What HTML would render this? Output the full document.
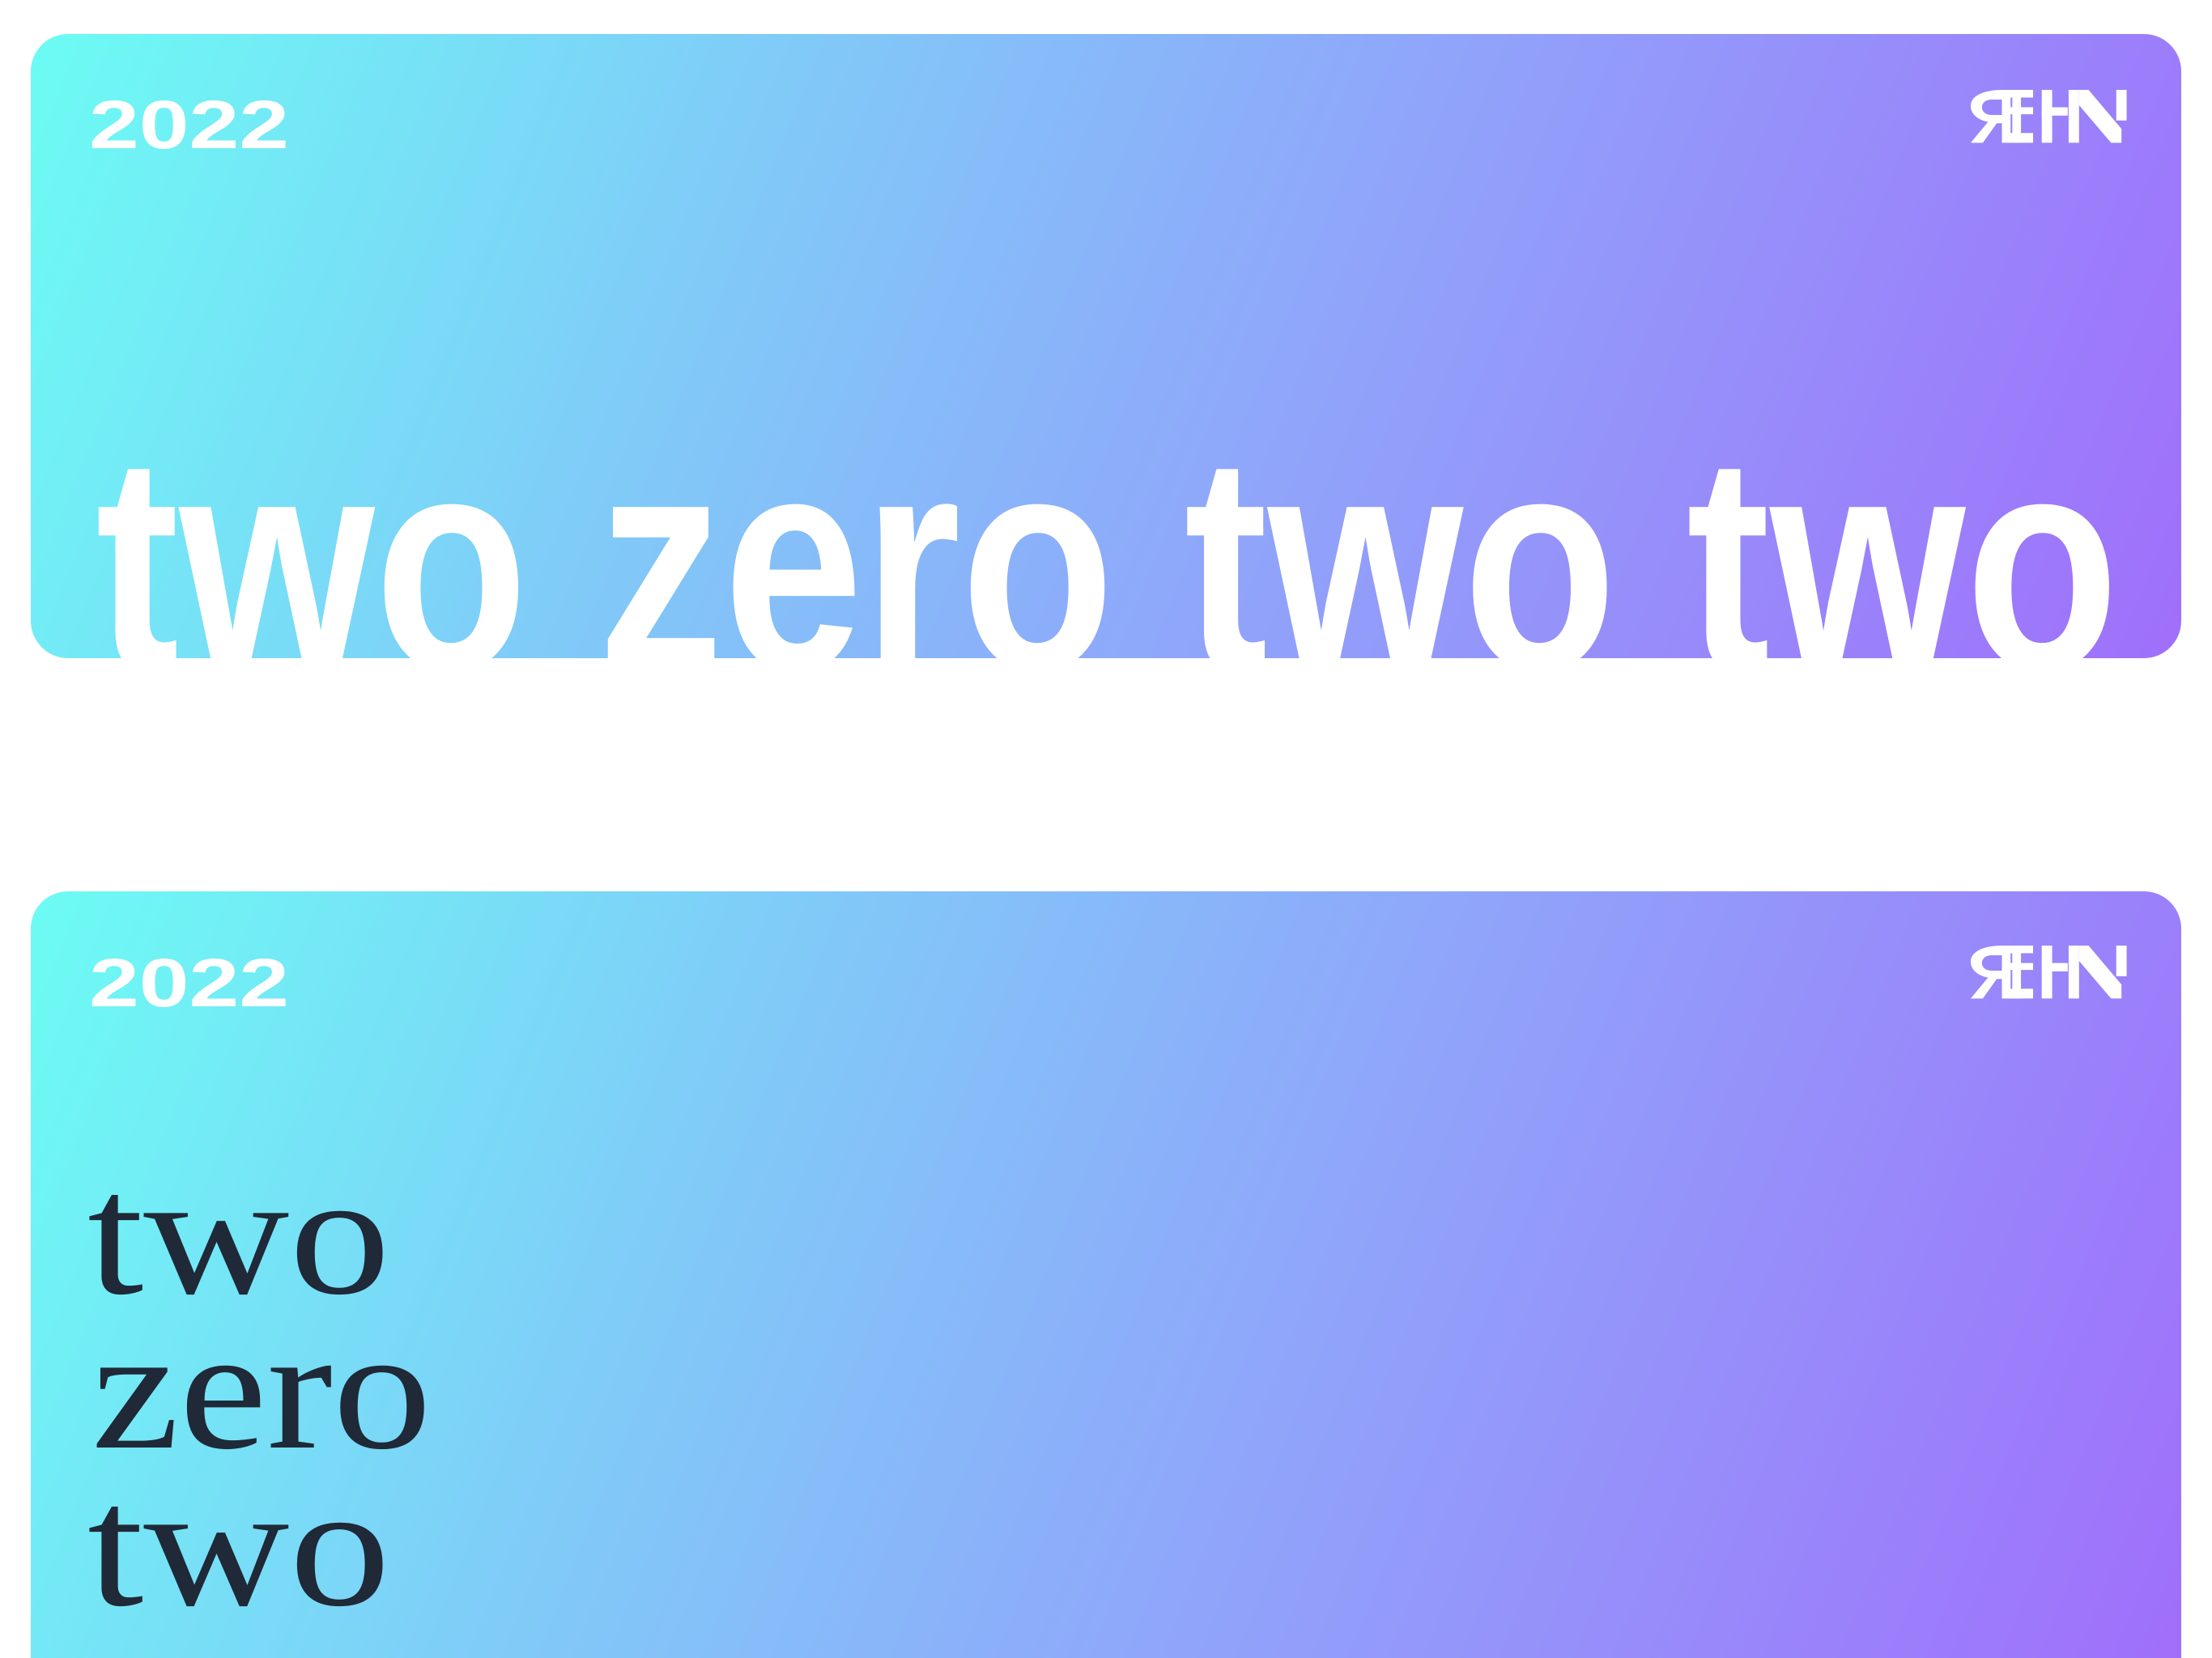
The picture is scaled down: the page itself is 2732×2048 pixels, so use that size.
<!DOCTYPE html>
<html><head><meta charset="utf-8"><style>
html,body{margin:0;padding:0;background:#fff;width:2732px;height:2048px;overflow:hidden;position:relative}
.card{position:absolute;left:38px;width:2656px;border-radius:46px;overflow:hidden;
background:linear-gradient(112deg,#6cfcf4 0%,#7fcdf8 30%,#8fa6fa 58%,#a06ffb 100%)}
svg{position:absolute;left:0;top:0;overflow:hidden}
</style></head><body>

<div class="card" style="top:42px;height:771px">
<svg width="2656" height="771">
 <text x="72" y="141" font-family="Liberation Sans, sans-serif" font-weight="bold" font-size="84" fill="#fff" textLength="247" lengthAdjust="spacingAndGlyphs">2022</text>
 <text x="80" y="784" font-family="Liberation Sans, sans-serif" font-weight="bold" font-size="378" fill="#fff" textLength="2499" lengthAdjust="spacingAndGlyphs">two zero two two</text>
</svg>
</div>

<div class="card" style="top:1101px;height:947px;border-radius:46px 46px 0 0">
<svg width="2656" height="947">
 <text x="72" y="142" font-family="Liberation Sans, sans-serif" font-weight="bold" font-size="84" fill="#fff" textLength="247" lengthAdjust="spacingAndGlyphs">2022</text>
 <g font-family="Liberation Serif, serif" font-size="215" fill="#1f2937">
  <text x="70" y="496" textLength="374" lengthAdjust="spacingAndGlyphs">two</text>
  <text x="75" y="687" textLength="420" lengthAdjust="spacingAndGlyphs">zero</text>
  <text x="70" y="881" textLength="374" lengthAdjust="spacingAndGlyphs">two</text>
  <text x="70" y="1072" textLength="374" lengthAdjust="spacingAndGlyphs">two</text>
 </g>
</svg>
</div>

<svg width="2732" height="2048" style="pointer-events:none">
 <defs>
  <g id="logo" fill="#fff">
   <path d="M72,0 H36 C16,0 0,8 0,23 C0,36 10,44 20,46 L0,76 H14 L30,48 H36 V76 H46 V0 Z M36,14 V36 H24 C17,36 13,31 13,25 C13,19 17,14 24,14 Z"/>
   <rect x="42" y="0" width="30" height="11"/>
   <rect x="42" y="25" width="30" height="10"/>
   <rect x="42" y="62" width="30" height="14"/>
   <rect x="48" y="0" width="10" height="76"/>
   <rect x="82" y="0" width="12" height="76"/>
   <rect x="82" y="25" width="30" height="12"/>
   <rect x="113" y="0" width="12" height="76"/>
   <polygon points="125,0 136,0 174,56 174,76 162,76 125,22"/>
   <rect x="168" y="0" width="12" height="44"/>
  </g>
 </defs>
 <use href="#logo" transform="translate(2434,111) scale(1.07,0.86)"/>
 <use href="#logo" transform="translate(2434,1168) scale(1.07,0.86)"/>
</svg>
</body></html>
